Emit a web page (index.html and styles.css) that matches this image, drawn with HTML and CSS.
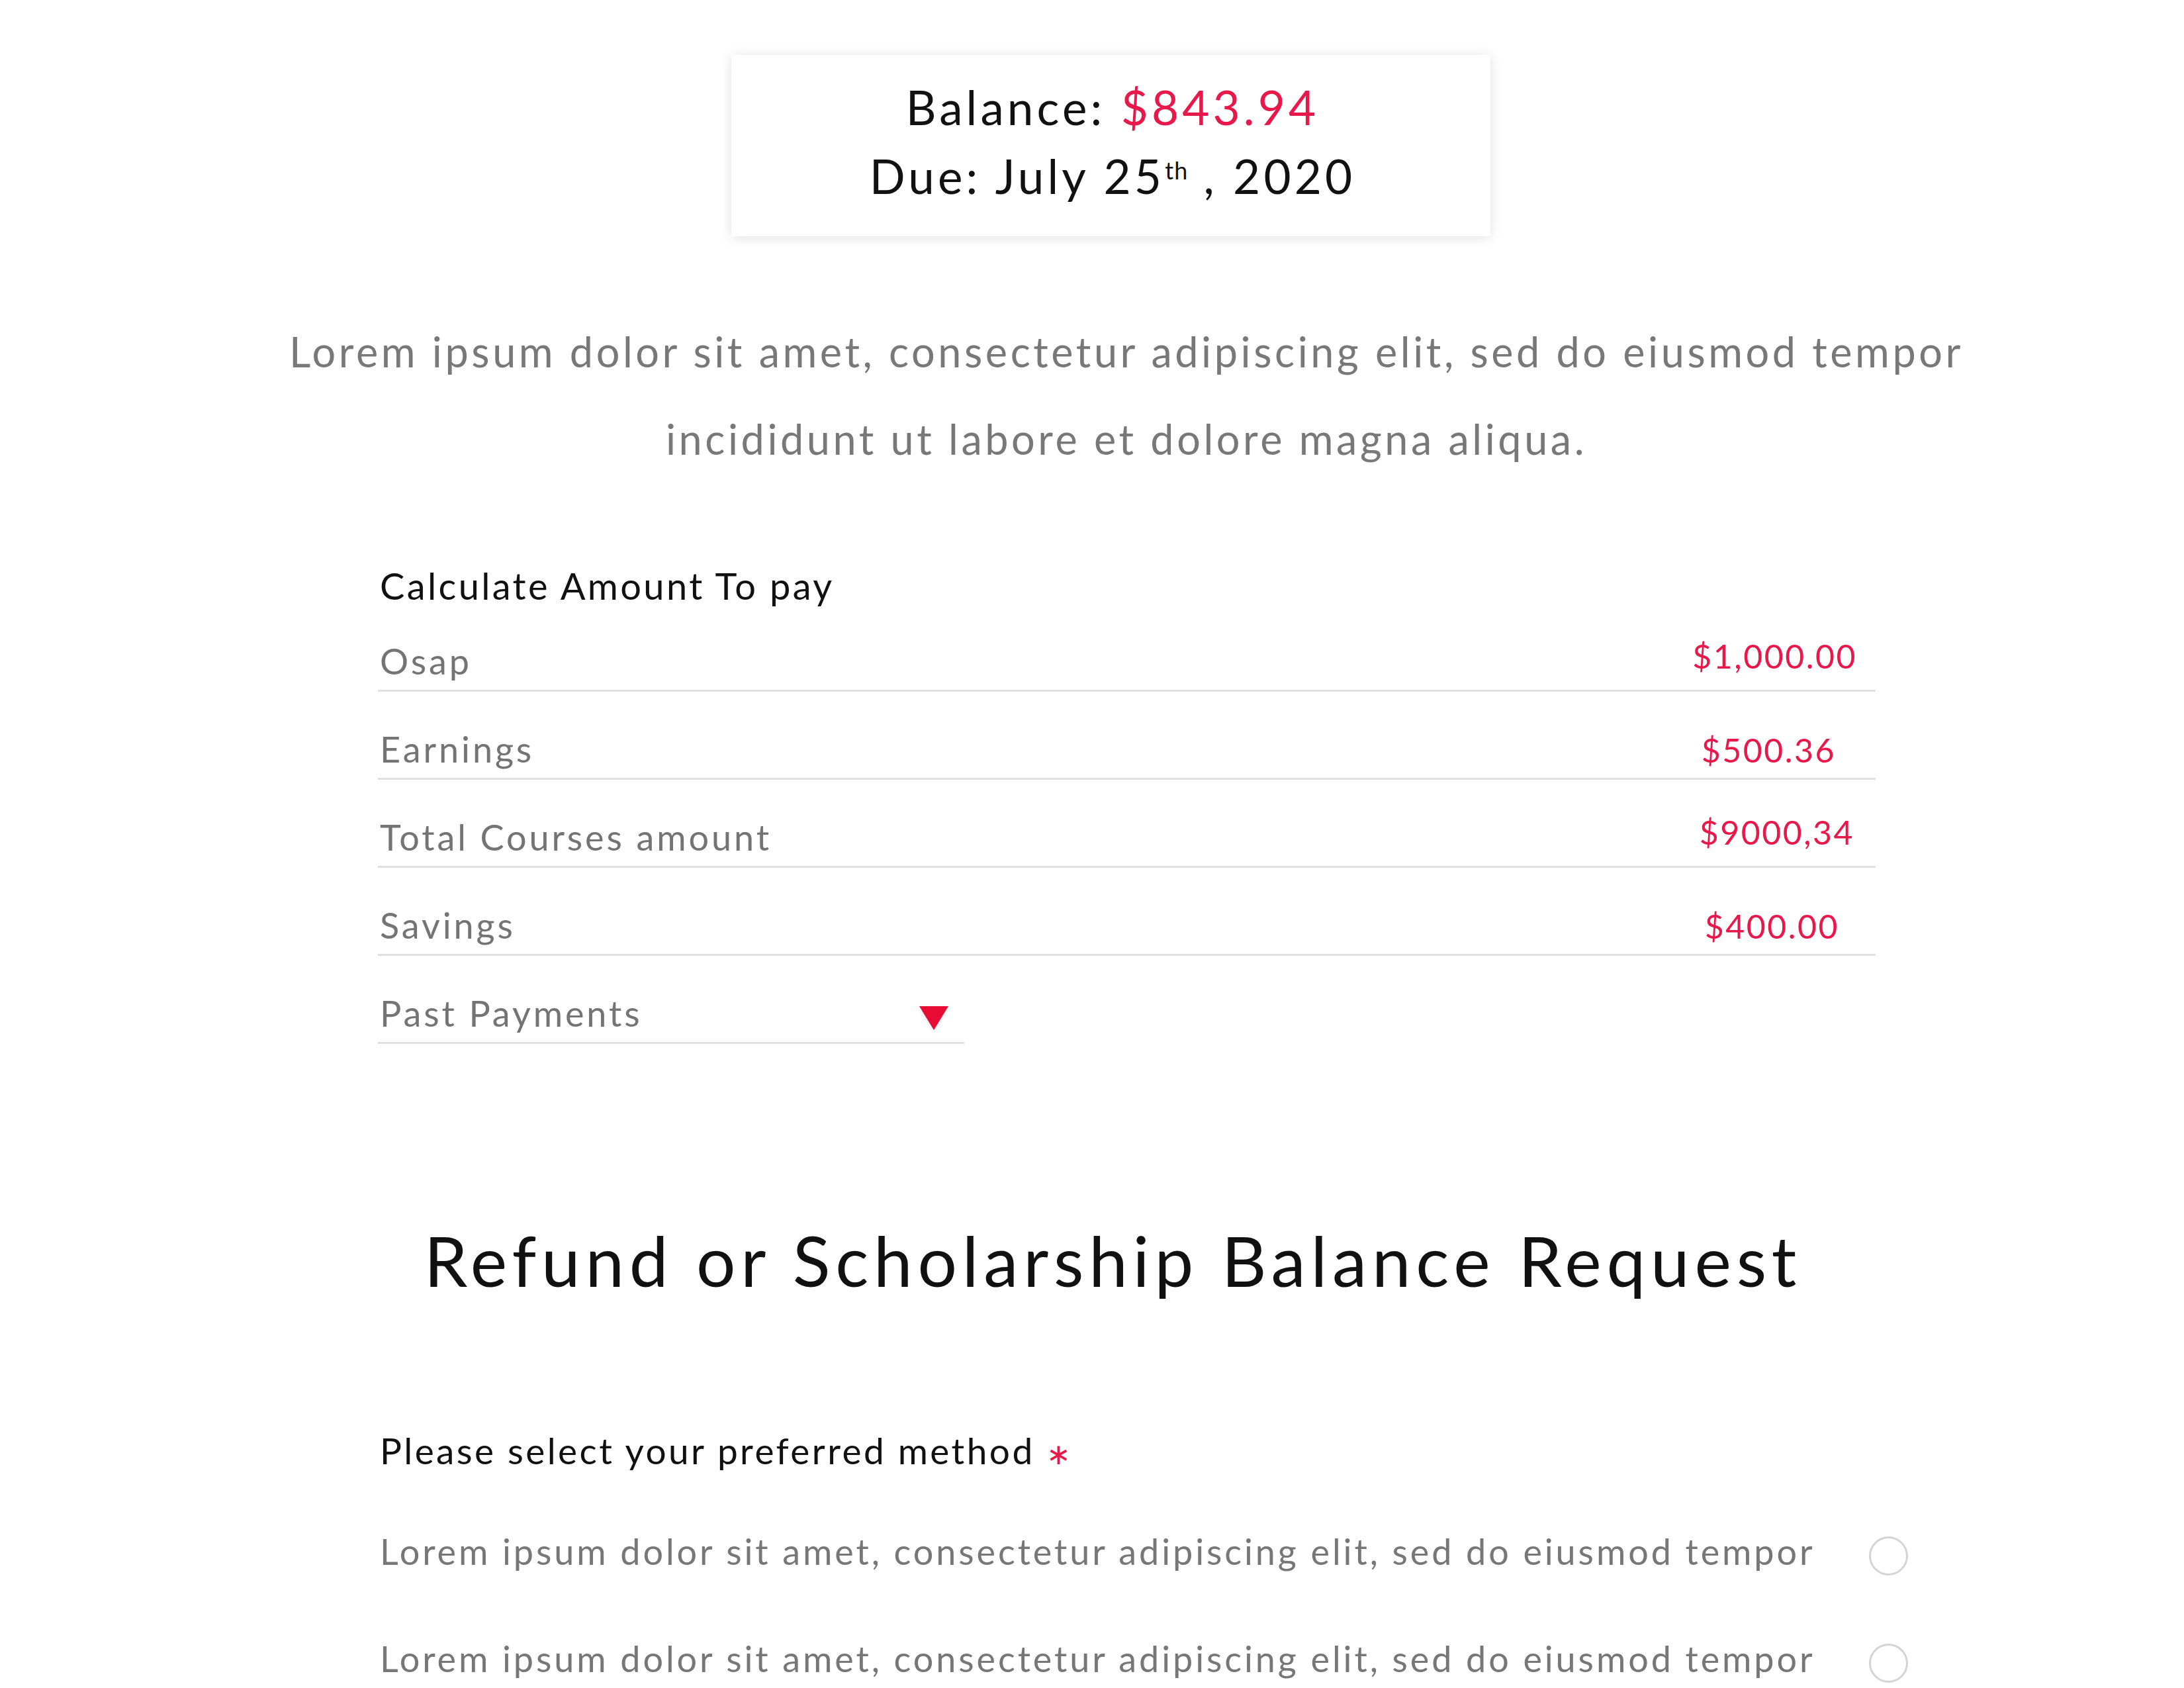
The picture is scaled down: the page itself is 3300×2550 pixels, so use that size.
FILE: index.html
```html
<!DOCTYPE html>
<html lang="en">
<head>
<meta charset="utf-8">
<title>Balance</title>
<link rel="stylesheet" href="styles.css">
</head>
<body>
<main class="page">
  <section class="balance-card">
    <p class="balance-line">Balance: <span class="accent">$843.94</span></p>
    <p class="balance-line">Due: July 25<sup class="ord">th</sup> , 2020</p>
  </section>

  <p class="intro">Lorem ipsum dolor sit amet, consectetur adipiscing elit, sed do eiusmod tempor<br>incididunt ut labore et dolore magna aliqua.</p>

  <section class="calc">
    <h2 class="calc-title">Calculate Amount To pay</h2>
    <div class="calc-row">
      <span class="calc-label">Osap</span>
      <span class="calc-value value-high value-r1">$1,000.00</span>
    </div>
    <div class="calc-row">
      <span class="calc-label">Earnings</span>
      <span class="calc-value value-r2">$500.36</span>
    </div>
    <div class="calc-row">
      <span class="calc-label">Total Courses amount</span>
      <span class="calc-value value-high value-r3">$9000,34</span>
    </div>
    <div class="calc-row">
      <span class="calc-label">Savings</span>
      <span class="calc-value value-r4">$400.00</span>
    </div>
    <div class="calc-row calc-row-select">
      <span class="calc-label">Past Payments</span>
      <span class="caret"></span>
    </div>
  </section>

  <h1 class="refund-title">Refund or Scholarship Balance Request</h1>

  <section class="method">
    <p class="method-label">Please select your preferred method <span class="req">∗</span></p>
    <label class="method-option">
      <span class="option-text">Lorem ipsum dolor sit amet, consectetur adipiscing elit, sed do eiusmod tempor</span>
      <span class="radio"></span>
    </label>
    <label class="method-option">
      <span class="option-text">Lorem ipsum dolor sit amet, consectetur adipiscing elit, sed do eiusmod tempor</span>
      <span class="radio"></span>
    </label>
  </section>
</main>
</body>
</html>
```

FILE: styles.css
```css
* { box-sizing: border-box; }

html, body {
  margin: 0;
  padding: 0;
  background: #ffffff;
}

body {
  font-family: "Lato", "Liberation Sans", sans-serif;
  color: #111111;
}

.page {
  width: 3300px;
  min-height: 2550px;
  display: flex;
  flex-direction: column;
  align-items: flex-start;
  padding-top: 83px;
}

/* ---------- balance card ---------- */
.balance-card {
  margin-left: 1105px;
  width: 1147px;
  height: 274px;
  padding-top: 27px;
  padding-left: 5px;
  background: #ffffff;
  box-shadow: 0 2px 18px rgba(0, 0, 0, 0.12);
  text-align: center;
}

.balance-line {
  margin: 0;
  font-size: 71px;
  letter-spacing: 0.072em;
  line-height: 104px;
  color: #111111;
  white-space: nowrap;
}

.accent { color: #e8194a; }

.ord {
  font-size: 36px;
  line-height: 0;
  letter-spacing: 0.03em;
  vertical-align: 22px;
}

/* ---------- intro ---------- */
.intro {
  margin: 108px 0 0 433px;
  padding-left: 4px;
  width: 2534px;
  font-size: 63px;
  letter-spacing: 0.072em;
  line-height: 132px;
  color: #787878;
  text-align: center;
  white-space: nowrap;
}

/* ---------- calculator ---------- */
.calc {
  margin-left: 571px;
  width: 2263px;
  margin-top: 125px;
}

.calc-title {
  margin: 0;
  padding-left: 3px;
  font-size: 56px;
  font-weight: 400;
  letter-spacing: 0.06em;
  line-height: 62px;
  color: #111111;
}

.calc-row {
  display: flex;
  justify-content: space-between;
  align-items: flex-end;
  height: 133px;
  border-bottom: 3px solid #e0e0e0;
}

.calc-row:first-of-type { margin-top: -4px; }

.calc-label {
  padding-left: 3px;
  padding-bottom: 11px;
  font-size: 54px;
  letter-spacing: 0.072em;
  line-height: 65px;
  color: #747474;
}

.calc-value {
  font-size: 50px;
  letter-spacing: 0.05em;
  line-height: 60px;
  color: #e8194a;
  padding-bottom: 12px;
}

.value-high { padding-bottom: 21px; }

.value-r1 { margin-right: 28px; }
.value-r2 { margin-right: 60px; }
.value-r3 { margin-right: 32px; }
.value-r4 { margin-right: 55px; }

.calc-row-select {
  width: 886px;
}

.caret {
  width: 0;
  height: 0;
  margin-right: 24px;
  margin-bottom: 18px;
  border-left: 22px solid transparent;
  border-right: 22px solid transparent;
  border-top: 36px solid #e80c35;
  filter: drop-shadow(0 2px 3px rgba(0, 0, 0, 0.12));
}

/* ---------- refund heading ---------- */
.refund-title {
  margin: 263px 0 0 546px;
  padding-left: 8px;
  width: 2263px;
  font-size: 105px;
  font-weight: 400;
  letter-spacing: 0.074em;
  line-height: 126px;
  color: #111111;
  text-align: center;
  white-space: nowrap;
}

/* ---------- method ---------- */
.method {
  margin-left: 571px;
  width: 2312px;
  margin-top: 192px;
}

.method-label {
  margin: 0;
  padding-left: 3px;
  font-size: 55px;
  letter-spacing: 0.062em;
  line-height: 66px;
  color: #111111;
}

.req {
  color: #e8194a;
  font-size: 44px;
}

.method-option {
  display: flex;
  justify-content: space-between;
  align-items: center;
  height: 162px;
}

.method-option:first-of-type { margin-top: 34px; }

.option-text {
  padding-left: 3px;
  font-size: 54px;
  letter-spacing: 0.072em;
  color: #777777;
  white-space: nowrap;
}

.radio {
  width: 59px;
  height: 59px;
  margin-top: 14px;
  border: 3px solid #d4d4d4;
  border-radius: 50%;
}
```
